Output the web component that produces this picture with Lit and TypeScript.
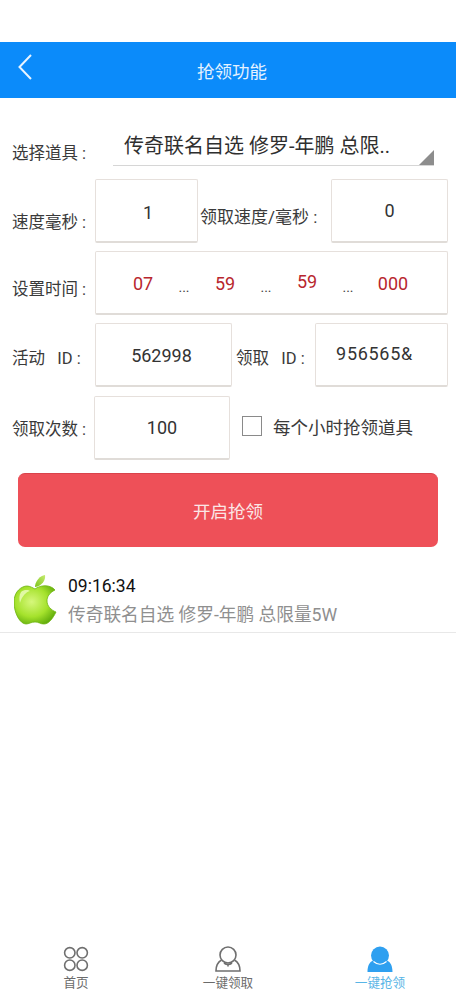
import { LitElement, html, css } from "lit";
import { customElement } from "lit/decorators.js";

@customElement("app-root")
export class AppRoot extends LitElement {
  static styles = css`
    :host {
      display: flex;
      flex-direction: column;
      width: 456px;
      height: 1008px;
      background: #fff;
      overflow: hidden;
      font-family: "Roboto", "Noto Sans CJK SC", sans-serif;
      color: #333;
    }
    .status { height: 42px; flex: none; }
    .header {
      height: 56px;
      flex: none;
      background: #0b8bfa;
      display: flex;
      align-items: center;
      justify-content: center;
      position: relative;
      color: #e4f2ff;
      font-size: 17.5px;
      padding-left: 8px;
      box-sizing: border-box;
      padding-top: 1px;
    }
    .back { position: absolute; left: 17px; top: 11px; }
    .form {
      display: flex;
      flex-direction: column;
      padding: 32px 8px 0 12px;
    }
    .row { display: flex; align-items: center; height: 64px; margin-bottom: 8px; }
    .row.last { margin-top: 1px; }
    .label { font-size: 16.5px; line-height: 24px; width: 83px; flex: none; white-space: nowrap; color: #3a3a3a; }
    .p24 { padding-top: 24px; }
    .p14 { padding-top: 14px; }
    .p8 { padding-top: 8px; }
    .p4 { padding-top: 4px; }
    .select-row { height: 36px; margin-bottom: 13px; align-items: flex-end; }
    .select {
      margin-left: 18px;
      width: 321px;
      height: 36px;
      box-sizing: border-box;
      border-bottom: 1px solid #d6d6d6;
      position: relative;
      font-size: 20px;
      line-height: 26px;
      color: #2f2f2f;
      padding: 3px 0 0 11px;
      white-space: nowrap;
    }
    .tri { position: absolute; right: 0; bottom: 0; }
    .box {
      height: 64px;
      box-sizing: border-box;
      border: 1px solid #e6e0dc;
      border-bottom: 2px solid #e0dcd8;
      border-radius: 2px;
      display: flex;
      align-items: center;
      justify-content: center;
      font-size: 18px;
      color: #333;
      flex: none;
    }
    .b1 { width: 103px; padding: 3px 0 0 3px; }
    .mid { font-size: 17px; width: 133px; padding: 8px 0 0 2px; box-sizing: border-box; white-space: nowrap; flex: none; color: #3a3a3a; }
    .b2 { width: 117px; }
    .time { width: 353px; display: grid; grid-template-columns: 32px 50px 32px 50px 32px 50px 40px; padding: 1px 0 0 31px; justify-content: start; }
    .time span { color: #b8262e; text-align: center; }
    .time i { color: #444; font-style: normal; text-align: center; font-size: 14px; padding-top: 8px; }
    .time .up { padding-bottom: 3px; }
    .b3 { width: 137px; padding: 1px 4px 0 0; }
    .mid2 { font-size: 16.5px; width: 83px; box-sizing: border-box; padding: 4px 0 0 4px; white-space: nowrap; flex: none; color: #3a3a3a; }
    .b4 { width: 133px; padding: 0 14px 2px 0; letter-spacing: 0.7px; }
    .b5 { width: 136px; margin-left: -1px; }
    .check { display: flex; align-items: center; margin-left: 12px; font-size: 17.5px; padding-bottom: 5px; color: #3a3a3a; gap: 11px; white-space: nowrap; }
    .check span { padding-top: 2px; }
    .cb { width: 20px; height: 20px; box-sizing: border-box; border: 1px solid #8a8a8a; flex: none; }
    .start {
      margin: 5px 0 0 6px;
      width: 420px;
      height: 74px;
      box-sizing: border-box;
      background: #ee5058;
      border-top: 1px solid #d9434b;
      border-radius: 7px;
      color: #fbe6e6;
      font-size: 17.5px;
      display: flex;
      align-items: center;
      justify-content: center;
    }
    .item {
      display: flex;
      margin-top: 26px;
      height: 60px;
      flex: none;
      box-sizing: border-box;
      padding-left: 14px;
      border-bottom: 1px solid #e8e8e8;
      gap: 11px;
    }
    .apple { flex: none; margin-top: 2px; }
    .t { font-size: 17.5px; line-height: 24px; color: #111; padding-top: 1px; }
    .d { font-size: 17.7px; line-height: 24px; color: #8f8f8f; margin-top: 5px; white-space: nowrap; }
    .spacer { flex: 1; }
    .nav {
      height: 68px;
      flex: none;
      display: grid;
      grid-template-columns: 152px 152px 152px;
      padding-top: 6px;
      box-sizing: border-box;
    }
    .tab { display: flex; flex-direction: column; align-items: center; font-size: 12.6px; line-height: 18px; color: #6b6b6b; gap: 2px; }
    .tab.on { color: #58b5e6; }
    .tab svg { display: block; }
  `;

  render() {
    return html`
      <div class="status"></div>
      <div class="header">
        <svg class="back" width="16" height="28" viewBox="0 0 16 28" fill="none" stroke="#e8f4ff" stroke-width="2"><path d="M14 2 L2.500 14 L14 26"/></svg>
        抢领功能
      </div>
      <div class="form">
        <div class="row select-row">
          <div class="label">选择道具 :</div>
          <div class="select">传奇联名自选 修罗-年鹏 总限..
            <svg class="tri" width="15" height="15" viewBox="0 0 15 15"><path d="M15 0V15H0Z" fill="#8d8d8d"/></svg>
          </div>
        </div>
        <div class="row">
          <div class="label p24">速度毫秒 :</div>
          <div class="box b1">1</div>
          <div class="mid">领取速度/毫秒 :</div>
          <div class="box b2">0</div>
        </div>
        <div class="row">
          <div class="label p14">设置时间 :</div>
          <div class="box time">
            <span>07</span><i>...</i><span>59</span><i>...</i><span class="up">59</span><i>...</i><span>000</span>
          </div>
        </div>
        <div class="row">
          <div class="label p8">活动&nbsp;&nbsp;&nbsp;ID :</div>
          <div class="box b3">562998</div>
          <div class="mid2">领取&nbsp;&nbsp;&nbsp;ID :</div>
          <div class="box b4">956565&amp;</div>
        </div>
        <div class="row last">
          <div class="label p4">领取次数 :</div>
          <div class="box b5">100</div>
          <div class="check"><div class="cb"></div><span>每个小时抢领道具</span></div>
        </div>
        <div class="start">开启抢领</div>
      </div>
      <div class="item">
        <svg class="apple" width="43" height="50" viewBox="0 0 43 50">
          <defs>
            <radialGradient id="ag" cx="0.42" cy="0.42" r="0.65">
              <stop offset="0" stop-color="#d6f77c"/>
              <stop offset="0.6" stop-color="#a5e22c"/>
              <stop offset="1" stop-color="#62ad0c"/>
            </radialGradient>
            <linearGradient id="lg" x1="0" y1="1" x2="1" y2="0">
              <stop offset="0" stop-color="#7dc41a"/>
              <stop offset="1" stop-color="#c6ec70"/>
            </linearGradient>
          </defs>
          <path d="M21 11 C22 5 26 1 31 0 C32 5 28 11 21 12Z" fill="url(#lg)"/>
          <path d="M21 14 C26 10 36 9 41 15 C35 18 33 22 33 26 C33 31 37 35 42 37 C39 43 35 49 30 49 C26 49 25 47 21 47 C17 47 15 49 12 49 C6 49 0 38 0 27 C0 16 8 11 13 11 C16 11 19 13 21 14Z" fill="url(#ag)" stroke="#6fb512" stroke-width="0.8"/>
          <path d="M7 17 C10 14 15 15 16 16 C12 17 8 21 6 28 C5 24 5 20 7 17Z" fill="#f0fdc8" opacity=".75"/>
        </svg>
        <div>
          <div class="t">09:16:34</div>
          <div class="d">传奇联名自选 修罗-年鹏 总限量5W</div>
        </div>
      </div>
      <div class="spacer"></div>
      <div class="nav">
        <div class="tab">
          <svg width="26" height="26" viewBox="0 0 26 26" fill="none" stroke="#6f6f6f" stroke-width="1.6"><circle cx="6.800" cy="6.800" r="5.200"/><circle cx="19.200" cy="6.800" r="5.200"/><circle cx="6.800" cy="19.200" r="5.200"/><circle cx="19.200" cy="19.200" r="5.200"/></svg>
          首页
        </div>
        <div class="tab">
          <svg width="26" height="26" viewBox="0 0 26 26" fill="none" stroke="#6f6f6f" stroke-width="1.6"><circle cx="13" cy="9" r="8"/><path d="M6.500 14 C3 16 1 20 1 25 H25 C25 20 23 16 19.500 14"/><path d="M9 17 Q13 20 17 17 M13 18.500 V20.500"/></svg>
          一键领取
        </div>
        <div class="tab on">
          <svg width="26" height="26" viewBox="0 0 26 26"><circle cx="13" cy="9.500" r="9" fill="#2fa0f0"/><path d="M6 14.500 C2.500 16 0.500 20 0.500 26 H25.500 C25.500 20 23.500 16 20 14.500 C18 18 8 18 6 14.500Z" fill="#2fa0f0"/><path d="M6.500 15.500 Q13 21 19.500 15.500" fill="none" stroke="#fff" stroke-width="1.200"/></svg>
          一键抢领
        </div>
      </div>
    `;
  }
}
